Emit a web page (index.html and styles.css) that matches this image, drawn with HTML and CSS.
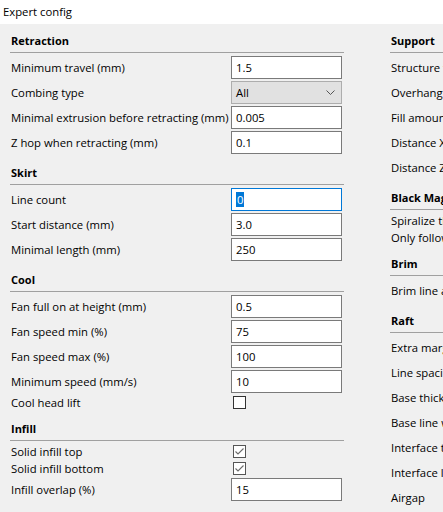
FILE: index.html
```html
<!DOCTYPE html>
<html>
<head>
<meta charset="utf-8">
<title>Expert config</title>
<link rel="stylesheet" href="styles.css">
</head>
<body>
<div class="titlebar">Expert config</div>
<div class="content">
  <div class="col">
    <div class="section">
      <div class="head first">Retraction</div>
      <div class="rows">
        <div class="row"><span class="label">Minimum travel (mm)</span><span class="field">1.5</span></div>
        <div class="row"><span class="label">Combing type</span><span class="select">All<svg class="chev" width="9" height="5" viewBox="0 0 9 5"><polyline points="0.5,0.5 4.5,4.5 8.5,0.5" fill="none" stroke="#555" stroke-width="1"/></svg></span></div>
        <div class="row"><span class="label">Minimal extrusion before retracting (mm)</span><span class="field">0.005</span></div>
        <div class="row"><span class="label">Z hop when retracting (mm)</span><span class="field">0.1</span></div>
      </div>
    </div>
    <div class="section">
      <div class="head">Skirt</div>
      <div class="rows">
        <div class="row"><span class="label">Line count</span><span class="field focus"><span class="sel">0</span></span></div>
        <div class="row"><span class="label">Start distance (mm)</span><span class="field">3.0</span></div>
        <div class="row"><span class="label">Minimal length (mm)</span><span class="field">250</span></div>
      </div>
    </div>
    <div class="section">
      <div class="head">Cool</div>
      <div class="rows">
        <div class="row"><span class="label">Fan full on at height (mm)</span><span class="field">0.5</span></div>
        <div class="row"><span class="label">Fan speed min (%)</span><span class="field">75</span></div>
        <div class="row"><span class="label">Fan speed max (%)</span><span class="field">100</span></div>
        <div class="row"><span class="label">Minimum speed (mm/s)</span><span class="field">10</span></div>
        <div class="row chk"><span class="label">Cool head lift</span><span class="box"></span></div>
      </div>
    </div>
    <div class="section">
      <div class="head">Infill</div>
      <div class="rows">
        <div class="row chk"><span class="label">Solid infill top</span><span class="box checked"><svg width="11" height="11" viewBox="0 0 11 11"><polyline points="1.5,5.5 4,8 9.5,2.5" fill="none" stroke="#6a6a6a" stroke-width="1.1"/></svg></span></div>
        <div class="row chk"><span class="label">Solid infill bottom</span><span class="box checked"><svg width="11" height="11" viewBox="0 0 11 11"><polyline points="1.5,5.5 4,8 9.5,2.5" fill="none" stroke="#6a6a6a" stroke-width="1.1"/></svg></span></div>
        <div class="row"><span class="label">Infill overlap (%)</span><span class="field">15</span></div>
      </div>
    </div>
  </div>
  <div class="col">
    <div class="section">
      <div class="head first">Support</div>
      <div class="rows">
        <div class="row"><span class="label">Structure type</span></div>
        <div class="row"><span class="label">Overhang angle for support (deg)</span></div>
        <div class="row"><span class="label">Fill amount (%)</span></div>
        <div class="row"><span class="label">Distance X/Y (mm)</span></div>
        <div class="row"><span class="label">Distance Z (mm)</span></div>
      </div>
    </div>
    <div class="section">
      <div class="head">Black Magic</div>
      <div class="rows">
        <div class="row chk"><span class="label">Spiralize the outer contour</span></div>
        <div class="row chk"><span class="label">Only follow mesh surface</span></div>
      </div>
    </div>
    <div class="section">
      <div class="head">Brim</div>
      <div class="rows">
        <div class="row"><span class="label">Brim line amount</span></div>
      </div>
    </div>
    <div class="section">
      <div class="head">Raft</div>
      <div class="rows">
        <div class="row"><span class="label">Extra margin (mm)</span></div>
        <div class="row"><span class="label">Line spacing (mm)</span></div>
        <div class="row"><span class="label">Base thickness (mm)</span></div>
        <div class="row"><span class="label">Base line width (mm)</span></div>
        <div class="row"><span class="label">Interface thickness (mm)</span></div>
        <div class="row"><span class="label">Interface line width (mm)</span></div>
        <div class="row"><span class="label">Airgap</span></div>
      </div>
    </div>
  </div>
</div>
</body>
</html>
```

FILE: styles.css
```css
html, body {
  margin: 0;
  padding: 0;
}
body {
  width: 443px;
  height: 512px;
  overflow: hidden;
  background: #f0f0f0;
  color: #000;
  font-family: "Open Sans", "Noto Sans", sans-serif;
  font-size: 11.3px;
  line-height: 16px;
}
.titlebar {
  height: 24px;
  background: #fff;
  padding-left: 3px;
  display: flex;
  align-items: center;
}
.content {
  display: flex;
  gap: 46px;
  padding-left: 10px;
  white-space: nowrap;
}
.col {
  flex: none;
  width: 334px;
}
.head {
  box-sizing: border-box;
  height: 30px;
  padding-top: 10px;
  padding-left: 1px;
  font-weight: bold;
  font-size: 11px;
  border-bottom: 1px solid #a0a0a0;
}
.head.first {
  height: 29px;
  padding-top: 9px;
}
.rows {
  padding-top: 2px;
}
.row {
  height: 25px;
  display: flex;
  align-items: center;
}
.row.chk {
  height: 17px;
}
.label {
  flex: none;
  width: 220px;
  padding-left: 1px;
}
.field, .select {
  box-sizing: border-box;
  flex: none;
  width: 111px;
  height: 23px;
  border: 1px solid #7a7a7a;
  background: #fff;
  padding-left: 4px;
  display: flex;
  align-items: center;
}
.field.focus {
  border-color: #0078d7;
}
.sel {
  background: #0078d7;
  color: #fff;
  line-height: 15px;
  padding: 0 1px;
}
.select {
  background: #e1e1e1;
  border-color: #adadad;
  justify-content: space-between;
  padding-right: 6px;
}
.box {
  box-sizing: border-box;
  flex: none;
  width: 13px;
  height: 13px;
  margin-left: 2px;
  border: 1px solid #333;
  background: #fff;
  display: flex;
}
.box.checked {
  border-color: #555;
}
```
